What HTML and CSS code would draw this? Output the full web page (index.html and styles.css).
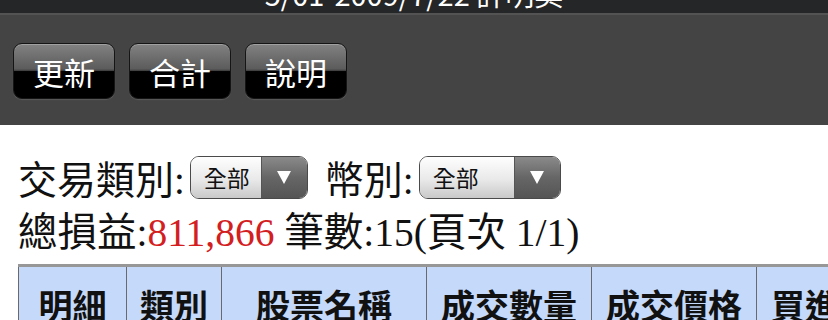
FILE: index.html
```html
<!DOCTYPE html>
<html lang="zh-Hant">
<head>
  <meta charset="UTF-8" />
  <meta name="viewport" content="width=device-width, initial-scale=1.0"/>
  <title>交易明細</title>
  <link rel="stylesheet" href="styles.css">
</head>
<body>
  <header class="titlebar">
    <h1>5/01-2009/7/22 許明奕</h1>
  </header>

  <nav class="toolbar">
    <button class="tool-btn">更新</button>
    <button class="tool-btn">合計</button>
    <button class="tool-btn">說明</button>
  </nav>

  <main class="content">
    <div class="filter-row">
      <span>交易類別:</span>
      <span class="picker picker-type">
        <span class="picker-label">全部</span>
        <span class="picker-arrow"><i class="tri"></i></span>
      </span>
      <span class="filter-gap">幣別:</span>
      <span class="picker picker-currency">
        <span class="picker-label">全部</span>
        <span class="picker-arrow"><i class="tri"></i></span>
      </span>
    </div>

    <div class="summary">
      總損益:<span class="profit">811,866</span> 筆數:15(頁次 1/1)
    </div>

    <table class="trades">
      <colgroup>
        <col class="c-detail">
        <col class="c-type">
        <col class="c-name">
        <col class="c-qty">
        <col class="c-price">
        <col class="c-buy">
      </colgroup>
      <thead>
        <tr>
          <th>明細</th>
          <th>類別</th>
          <th>股票名稱</th>
          <th>成交數量</th>
          <th>成交價格</th>
          <th>買進價格</th>
        </tr>
      </thead>
    </table>
  </main>
</body>
</html>
```

FILE: styles.css
```css
html, body {
  margin: 0;
  padding: 0;
  background: #fff;
  overflow: hidden;
}

body {
  font-family: "Liberation Serif", "Noto Sans CJK TC", serif;
  color: #111;
}

/* top title bar, mostly scrolled out of view */
.titlebar {
  height: 13px;
  overflow: hidden;
  background: #252627;
  border-bottom: 2px solid #535353;
}

.titlebar h1 {
  margin: -20px 0 0;
  font-family: "Noto Sans CJK TC", sans-serif;
  font-weight: normal;
  font-size: 29px;
  line-height: 26px;
  color: #fff;
  text-align: center;
  white-space: nowrap;
}

.toolbar {
  height: 110px;
  box-sizing: border-box;
  background: #444;
  padding: 28px 0 0 13px;
  display: flex;
  gap: 14px;
  align-items: flex-start;
}

.tool-btn {
  width: 102px;
  height: 56px;
  border: 1px solid #151515;
  border-radius: 9px;
  background: linear-gradient(#828282 0%, #5c5c5c 46%, #444 49%, #000 51%, #000 100%);
  box-shadow: 0 1px 1px rgba(255, 255, 255, 0.12), inset 0 1px 0 rgba(255, 255, 255, 0.25);
  color: #fff;
  font-family: "Noto Sans CJK TC", sans-serif;
  font-size: 31px;
  line-height: 1;
  padding: 0;
  cursor: pointer;
}

.content {
  padding: 0 18px;
}

.filter-row {
  margin-top: 26px;
  height: 52px;
  display: flex;
  align-items: center;
  font-size: 39px;
  white-space: nowrap;
}

.filter-gap {
  margin-left: 17px;
}

.picker {
  display: inline-flex;
  height: 43px;
  box-sizing: border-box;
  border: 1px solid #4a4a4a;
  border-radius: 9px;
  overflow: hidden;
  margin-left: 5px;
}

.picker-type { width: 118px; }
.picker-currency { width: 142px; }

.picker-label {
  flex: 1;
  background: linear-gradient(#fefefe, #e9e9e9 55%, #c9c9c9);
  font-family: "Noto Sans CJK TC", sans-serif;
  font-size: 23px;
  line-height: 41px;
  padding-left: 13px;
  color: #111;
}

.picker-arrow {
  width: 45px;
  background: linear-gradient(#8a8a8a, #666 50%, #555);
  border-left: 1px solid #555;
  display: flex;
  align-items: center;
  justify-content: center;
}

.tri {
  width: 0;
  height: 0;
  border-left: 7px solid transparent;
  border-right: 7px solid transparent;
  border-top: 13px solid #fff;
}

.summary {
  height: 52px;
  line-height: 52px;
  margin-top: 4px;
  font-size: 39.5px;
  white-space: nowrap;
}

.profit {
  color: #d3201f;
}

.trades {
  margin-top: 5px;
  border-collapse: collapse;
  table-layout: fixed;
  width: 903px;
  border-top: 3px solid #979797;
}

.c-detail { width: 108px; }
.c-type { width: 95px; }
.c-name { width: 205px; }
.c-qty { width: 165px; }
.c-price { width: 165px; }
.c-buy { width: 165px; }

.trades th {
  background: #c5d9fb;
  border: 1px solid #6a6a6a;
  border-top: none;
  font-family: "Noto Sans CJK TC", sans-serif;
  font-weight: bold;
  font-size: 34px;
  line-height: 40px;
  padding: 18px 0;
  color: #111;
  white-space: nowrap;
  overflow: hidden;
}
```
